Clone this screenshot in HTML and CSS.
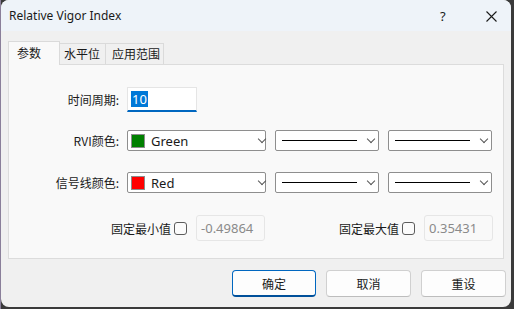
FILE: index.html
```html
<!DOCTYPE html>
<html lang="zh-CN">
<head>
    <meta charset="UTF-8">
    <title>Relative Vigor Index</title>
    <link rel="stylesheet" href="styles.css">
</head>
<body>
    <div class="window">
        <!-- 标题栏 -->
        <div class="titlebar">
            <span class="title">Relative Vigor Index</span>
            <span class="help">?</span>
            <span class="close">
                <svg width="11" height="11" viewBox="0 0 11 11"><path d="M0.5 0.5L10.5 10.5M10.5 0.5L0.5 10.5" stroke="#1a1a1a" stroke-width="1.1"/></svg>
            </span>
        </div>

        <div class="tabs">
            <div class="tab active">参数</div>
            <div class="tab">水平位</div>
            <div class="tab">应用范围</div>
        </div>

        <div class="panel">
            <div class="row row-period">
                <label class="label">时间周期:</label>
                <div class="edit"><span class="sel">10</span></div>
            </div>

            <div class="row row-rvi">
                <label class="label">RVI颜色:</label>
                <div class="combo color-combo">
                    <span class="swatch green"></span>
                    <span class="combo-text">Green</span>
                    <span class="chev"></span>
                </div>
                <div class="combo line-combo"><span class="line"></span><span class="chev"></span></div>
                <div class="combo line-combo"><span class="line"></span><span class="chev"></span></div>
            </div>

            <div class="row row-signal">
                <label class="label">信号线颜色:</label>
                <div class="combo color-combo">
                    <span class="swatch red"></span>
                    <span class="combo-text">Red</span>
                    <span class="chev"></span>
                </div>
                <div class="combo line-combo"><span class="line"></span><span class="chev"></span></div>
                <div class="combo line-combo"><span class="line"></span><span class="chev"></span></div>
            </div>

            <div class="row row-fixed">
                <div class="fixed fixed-min">
                    <span class="fixed-label">固定最小值</span>
                    <span class="check"></span>
                    <div class="value">-0.49864</div>
                </div>
                <div class="fixed fixed-max">
                    <span class="fixed-label">固定最大值</span>
                    <span class="check"></span>
                    <div class="value">0.35431</div>
                </div>
            </div>
        </div>

        <div class="buttons">
            <button class="btn default">确定</button>
            <button class="btn">取消</button>
            <button class="btn">重设</button>
        </div>
    </div>
</body>
</html>
```

FILE: styles.css
```css
* {
    margin: 0;
    padding: 0;
    box-sizing: border-box;
    font-family: "Noto Sans", "Noto Sans CJK SC", sans-serif;
}

body {
    width: 514px;
    height: 309px;
    overflow: hidden;
    background: #3a3a3a;
    border-left: 1px solid #8a7f9a;
}

/* 窗口 */
.window {
    width: 510px;
    height: 307px;
    background: #f0f0f0;
    border-radius: 8px;
    overflow: hidden;
    color: #1a1a1a;
    font-size: 12px;
}

.titlebar {
    height: 31px;
    background: #eef3f9;
    display: flex;
    align-items: center;
    padding-left: 8px;
}

.title {
    flex: 1;
    font-size: 12px;
    padding-bottom: 1px;
}

.help {
    font-size: 13px;
    width: 46px;
}

.close {
    width: 25px;
    display: flex;
    padding-top: 1px;
}

/* 标签页 */
.tabs {
    display: flex;
    align-items: flex-end;
    padding: 10px 0 0 7px;
    height: 33px;
}

.tab {
    height: 21px;
    padding-left: 4px;
    border: 1px solid #dadada;
    border-bottom: none;
    background: #f0f0f0;
    font-family: "Noto Sans CJK SC", sans-serif;
    line-height: 19px;
    margin-left: -1px;
    white-space: nowrap;
}

.tab:nth-child(2) { width: 47px; }
.tab:nth-child(3) { width: 59px; padding-left: 6px; }

.tab.active {
    width: 52px;
    height: 24px;
    margin-left: 0;
    margin-bottom: -1px;
    background: #f9f9f9;
    padding-left: 8px;
    line-height: 21px;
    position: relative;
    z-index: 1;
}

.panel {
    margin: 0 7px 0 7px;
    height: 195px;
    background: #f9f9f9;
    border: 1px solid #dcdcdc;
    padding-top: 22px;
}

.row {
    display: flex;
    align-items: center;
}

.label {
    width: 111px;
    text-align: right;
    padding-right: 1px;
    font-family: "Noto Sans CJK SC", sans-serif;
    margin-right: 7px;
}

.edit {
    width: 70px;
    height: 25px;
    background: #fff;
    border: 1px solid #e5e5e5;
    border-bottom: 2px solid #0067c0;
    padding: 3px 0 0 3px;
}

.sel {
    display: inline-block;
    background: #0078d7;
    color: #fff;
    font-size: 13px;
    line-height: 16px;
    padding: 0 1px;
}

.row-rvi { margin-top: 18px; }
.row-signal { margin-top: 21px; }
.row-fixed { margin-top: 22px; }

.combo {
    height: 21px;
    background: #fff;
    border: 1px solid #8e8e8e;
    border-radius: 2px;
    display: flex;
    align-items: center;
    margin-right: 9px;
}

.color-combo {
    width: 139px;
    padding-left: 3px;
}

.line-combo {
    width: 104px;
    padding-left: 6px;
}

.swatch {
    width: 14px;
    height: 14px;
    border: 1px solid #8c8c8c;
}

.swatch.green { background: #008000; }
.swatch.red { background: #ff0000; }

.combo-text {
    flex: 1;
    padding-left: 6px;
    font-size: 13px;
}

.line {
    width: 75px;
    height: 1px;
    background: #000;
    margin-right: 11px;
}

.chev {
    width: 6px;
    height: 6px;
    border-right: 1px solid #555;
    border-bottom: 1px solid #555;
    transform: rotate(45deg);
    margin: -4px 0 0 0;
}

/* 固定值 */
.fixed {
    display: flex;
    align-items: center;
}

.fixed-min { margin-left: 102px; }
.fixed-max { margin-left: 74px; }

.fixed-label {
    font-family: "Noto Sans CJK SC", sans-serif;
    margin-right: 3px;
}

.check {
    width: 13px;
    height: 13px;
    border: 1px solid #5c5c5c;
    border-radius: 3px;
    background: #fbfbfb;
    margin-right: 9px;
}

.value {
    width: 69px;
    height: 26px;
    border: 1px solid #e6e6e6;
    border-radius: 3px;
    background: #f9f9f9;
    color: #8a8a8a;
    padding: 3px 0 0 4px;
    font-size: 13px;
}

/* 按钮 */
.buttons {
    display: flex;
    justify-content: flex-end;
    gap: 10px;
    padding: 11px 5px 0 0;
}

.btn {
    width: 85px;
    height: 27px;
    background: #fdfdfd;
    border: 1px solid #d0d0d0;
    border-bottom-color: #bdbdbd;
    border-radius: 4px;
    font-family: "Noto Sans CJK SC", sans-serif;
    font-size: 12px;
    color: #1a1a1a;
}

.btn.default {
    width: 84px;
    border: 1px solid #0067c0;
    border-bottom: 2px solid #00509a;
}
```
